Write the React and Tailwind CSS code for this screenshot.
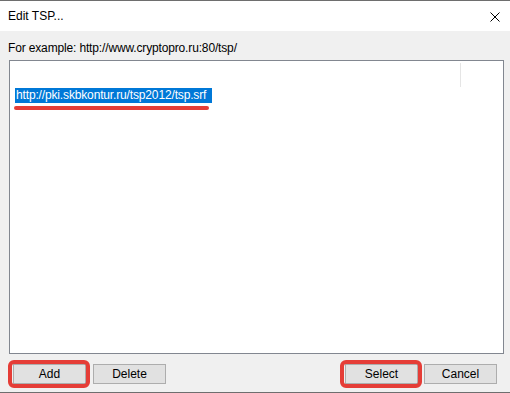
const font = { fontFamily: '"Liberation Sans", Arial, sans-serif' };

function Button({ label, marked }) {
  return (
    <div className="relative">
      <button className="w-[73px] h-[20px] bg-[#e1e1e1] border border-[#adadad] text-[12px] leading-none text-black flex items-center justify-center">
        {label}
      </button>
      {marked && (
        <div className="absolute -left-[5px] -right-[4px] -top-[4px] -bottom-[4px] border-[4px] border-[#e53d37] rounded-[6px] pointer-events-none" />
      )}
    </div>
  );
}

export default function App() {
  return (
    <div
      className="w-[510px] h-[393px] flex flex-col bg-[#f0f0f0] border-t border-b border-[#6e6e6e] overflow-hidden"
      style={font}
    >
      {/* Title bar */}
      <div className="h-[30px] bg-white flex items-center justify-between pl-2 pr-[10px]">
        <span className="text-[12px] text-black">Edit TSP...</span>
        <svg width="10" height="10" viewBox="0 0 10 10" className="mt-px">
          <path d="M0.5 0.5 L9.5 9.5 M9.5 0.5 L0.5 9.5" stroke="#000" strokeWidth="1" />
        </svg>
      </div>

      {/* Body */}
      <div className="flex-1 flex flex-col pl-[9px] pr-[6px] pt-[9px] pb-[8px]">
        <p className="text-[12px] leading-[16px] tracking-[-0.15px] text-black -ml-px">
          For example: http://www.cryptopro.ru:80/tsp/
        </p>

        <div className="mt-[4px] h-[294px] bg-white border border-[#828790] relative">
          <div className="absolute left-[450px] top-[2px] w-px h-[24px] bg-[#e5e5e5]" />
          <div className="pt-[27px] pl-[5px] flex flex-col items-start">
            <span className="bg-[#0078d7] text-white text-[12px] leading-[15px] tracking-[-0.15px] pl-[1px] pr-[6px]">
              http://pki.skbkontur.ru/tsp2012/tsp.srf
            </span>
            <div className="mt-[3px] -ml-[1px] w-[195px] h-[4px] rounded-full bg-[#e53d37]" />
          </div>
        </div>

        <div className="mt-[10px] flex items-center">
          <div className="ml-[4px] flex gap-[7px]">
            <Button label="Add" marked />
            <Button label="Delete" />
          </div>
          <div className="ml-auto mr-[7px] flex gap-[6px]">
            <Button label="Select" marked />
            <Button label="Cancel" />
          </div>
        </div>
      </div>
    </div>
  );
}
